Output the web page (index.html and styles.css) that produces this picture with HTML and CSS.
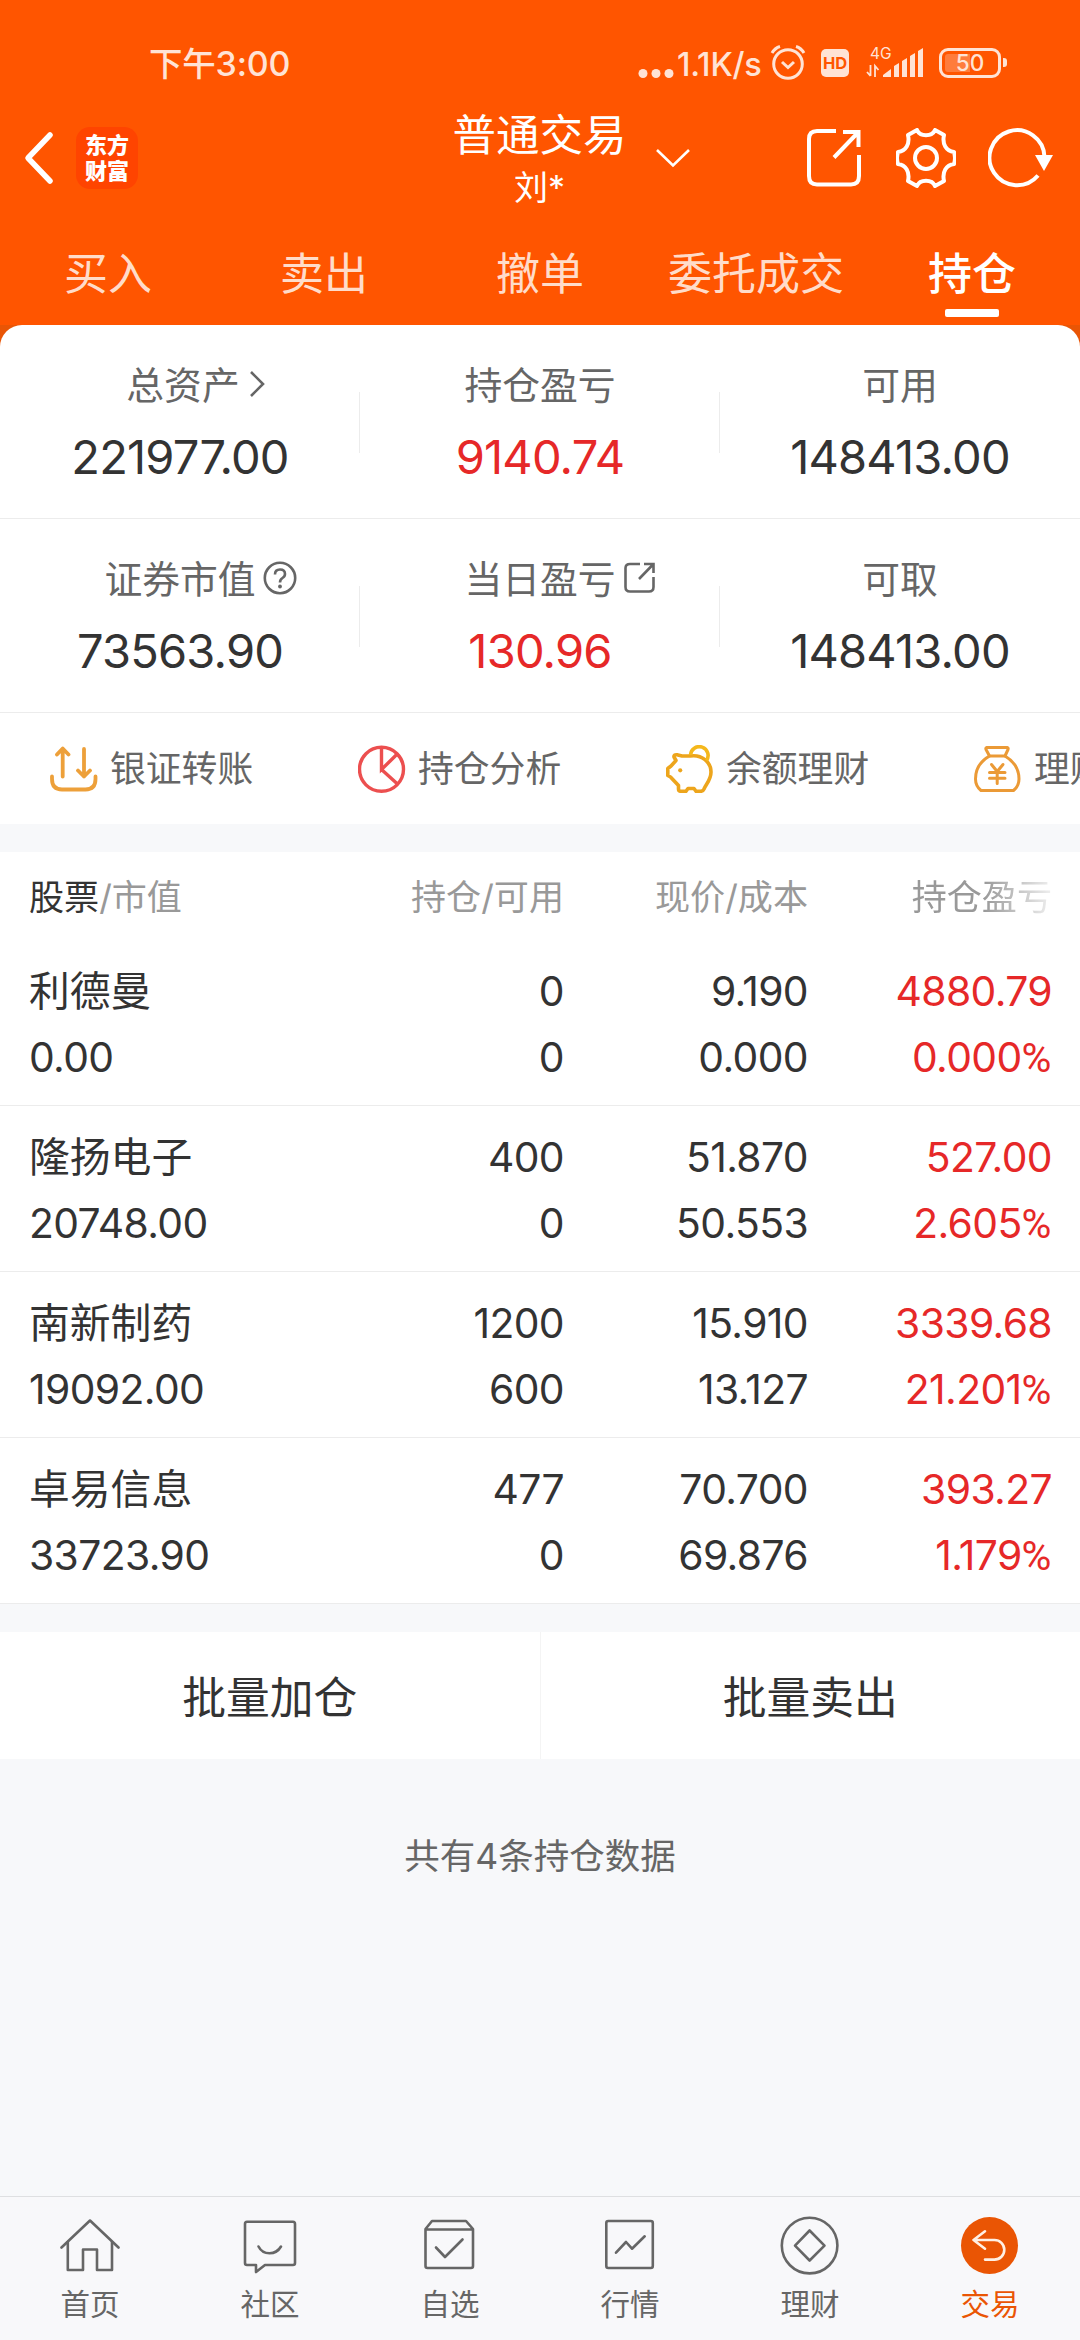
FILE: index.html
```html
<!DOCTYPE html>
<html lang="zh-CN">
<head>
    <meta charset="UTF-8" />
    <meta name="viewport" content="width=device-width, initial-scale=1.0" />
    <title>普通交易 - 持仓</title>
    <link rel="stylesheet" href="styles.css">
</head>
<body>
    <div class="app">
        <header class="top">
            <div class="status-bar">
                <span class="clock"><span class="clock-cn">下午</span>3:00</span>
                <div class="status-right">
                    <svg class="dots" width="36" height="34" viewBox="0 0 36 34" fill="currentColor"><circle cx="5" cy="26.5" r="4.5" /><circle cx="18" cy="26.5" r="4.5" /><circle cx="31" cy="26.5" r="4.5" /></svg>
                    <span class="speed">1.1K/s</span>
                    <svg class="alarm" width="36" height="36" viewBox="0 0 36 36" fill="none" stroke="currentColor" stroke-width="3"><circle cx="18" cy="20" r="14.3" /><path d="M12 18 L18 23.5 L24 18" /><path d="M2 9 Q5 4 10 2.5 M26 2.5 Q31 4 34 9" /></svg>
                    <span class="hd">HD</span>
                    <svg class="signal" width="58" height="36" viewBox="0 0 58 36" fill="currentColor">
                        <text x="4" y="15.5" font-size="15.5">4G</text>
                        <path d="M4.5 22 V33 M1 29 L4.5 33 M9 34 V23 L12.5 27" fill="none" stroke="currentColor" stroke-width="1.8" />
                        <path d="M17 34 V32 L25 26 V34 Z M28 23 l5 -3 V34 h-5 Z M36 18 l5 -3 V34 h-5 Z M44 13 l5 -3 V34 h-5 Z M52 8 l5 -3 V34 h-5 Z" />
                    </svg>
                    <div class="battery"><span>50</span></div>
                </div>
            </div>

            <div class="title-bar">
                <div class="title-left">
                    <svg width="30" height="54" viewBox="0 0 30 54" fill="none" stroke="#fff" stroke-width="5.5" stroke-linecap="round" stroke-linejoin="round"><path d="M26 4 L4 27 L26 50" /></svg>
                    <div class="logo">东方<br>财富</div>
                </div>
                <div class="title-text">
                    <h1>普通交易</h1>
                    <p>刘*</p>
                </div>
                <div class="title-right">
                    <svg class="arrow-down" width="36" height="22" viewBox="0 0 36 22" fill="none" stroke="#fff" stroke-width="2.6"><path d="M2 3 L18 18.5 L34 3" /></svg>
                    <svg class="share" width="54" height="58" viewBox="0 0 54 58" fill="none" stroke="#fff" stroke-width="4"><path d="M29 2 H10 Q2 2 2 10 V47 Q2 55.5 10 55.5 H44 Q52 55.5 52 47 V26" /><path d="M36 3 H51.5 V18 M51.5 3 L27 28.5" /></svg>
                    <svg class="gear" width="60" height="60" viewBox="0 0 60 60" fill="none" stroke="#fff" stroke-width="4" stroke-linejoin="round"><path d="M21 2 C24 9 36 9 39 2 L48 7 C46 16 50 23 58 24 Q60 30 58 36 C50 37 46 44 48 53 L39 58 C36 51 24 51 21 58 L12 53 C14 44 10 37 2 36 Q0 30 2 24 C10 23 14 16 12 7 Z" /><circle cx="30" cy="30" r="11" /></svg>
                    <svg class="refresh" width="66" height="60" viewBox="0 0 66 60"><path d="M56.5 29 A27.5 27.5 0 1 0 50 47.5" fill="none" stroke="#fff" stroke-width="4" /><path d="M47 27 H65 L56 43 Z" fill="#fff" /></svg>
                </div>
            </div>

            <nav class="tabs">
                <a>买入</a>
                <a>卖出</a>
                <a>撤单</a>
                <a>委托成交</a>
                <a class="active">持仓</a>
            </nav>
        </header>

        <!-- Account summary -->
        <div class="summary-wrap">
            <section class="summary">
                <div class="stats">
                    <div class="stat">
                        <div class="label label-more">总资产<svg width="16" height="30" viewBox="0 0 16 30" fill="none" stroke="currentColor" stroke-width="2.6"><path d="M2 3 L14 15 L2 27" /></svg></div>
                        <div class="value">221977.00</div>
                    </div>
                    <div class="stat">
                        <div class="label">持仓盈亏</div>
                        <div class="value red">9140.74</div>
                    </div>
                    <div class="stat">
                        <div class="label">可用</div>
                        <div class="value">148413.00</div>
                    </div>
                </div>
                <div class="stats">
                    <div class="stat">
                        <div class="label label-icon">证券市值<svg width="34" height="34" viewBox="0 0 34 34" fill="none" stroke="currentColor" stroke-width="2.6"><circle cx="17" cy="17" r="15.2" /><path d="M12 13.5 Q12 8.5 17 8.5 Q22 8.5 22 13 Q22 15.5 19.5 17 Q17 18.5 17 21.5" /><circle cx="17" cy="25.5" r="1.9" fill="currentColor" stroke="none" /></svg></div>
                        <div class="value">73563.90</div>
                    </div>
                    <div class="stat">
                        <div class="label label-icon">当日盈亏<svg width="34" height="34" viewBox="0 0 34 34" fill="none" stroke="currentColor" stroke-width="2.6"><path d="M17 3 H7 Q2.5 3 2.5 7 V26 Q2.5 30.5 7 30.5 H26 Q30.5 30.5 30.5 26 V16" /><path d="M21 3 H30.5 V12 M30.5 3 L16 18" /></svg></div>
                        <div class="value red">130.96</div>
                    </div>
                    <div class="stat">
                        <div class="label">可取</div>
                        <div class="value">148413.00</div>
                    </div>
                </div>

                <div class="shortcuts">
                    <div class="shortcut">
                        <svg width="48" height="48" viewBox="0 0 48 48" fill="none" stroke="#eda03a" stroke-width="3.8" stroke-linecap="round" stroke-linejoin="round"><path d="M12.7 31.5 V4 M7 9.5 L12.7 3.5 L18.5 9.5" /><path d="M34 4 V31.5 M28 25.5 L34 31.5 L40 25.5" /><path d="M2 31.5 V34 Q2 44.5 12 44.5 H35.5 Q45.5 44.5 45.5 34 V31.5" /></svg>
                        <span>银证转账</span>
                    </div>
                    <div class="shortcut">
                        <svg width="48" height="48" viewBox="0 0 48 48" fill="none" stroke="#ec4f4f" stroke-width="3.4"><circle cx="23.5" cy="24.3" r="22" /><path d="M23.5 3 V24.5 L39.5 8.8 M23.5 24.5 L39.5 39" /></svg>
                        <span>持仓分析</span>
                    </div>
                    <div class="shortcut">
                        <svg width="48" height="48" viewBox="0 0 48 48" fill="none" stroke="#eda51c" stroke-width="3.6" stroke-linejoin="round"><path d="M24 11 C36 9 45 17.5 45 27 C45 35 40 39 38 44 Q37 46.3 34.5 46.3 H30 L28 43.5 H22 L20 46.3 H15 Q12.5 46.3 12.5 44 V40.5 L4.5 32 L1.8 30.5 V23.5 L5 21 L10 15.5 L8 12 Q7.5 9.5 11 9.8 L16 11 Z" /><path d="M24.5 10 A8.8 8.8 0 1 1 40.5 15.5" stroke="#f5b81c" /><circle cx="14.2" cy="25.3" r="2.1" fill="#eda51c" stroke="none" /></svg>
                        <span>余额理财</span>
                    </div>
                    <div class="shortcut">
                        <svg width="48" height="48" viewBox="0 0 48 48" fill="none" stroke="#eb9a36" stroke-width="3" stroke-linecap="round" stroke-linejoin="round"><path d="M12.5 2.5 H33.5 Q34.5 3 34 4.5 L31 11 H15.5 L12 4.5 Q11.5 3 12.5 2.5 Z" /><path d="M15.5 11 C5 17 1.5 26 1.5 34 Q1.5 41 7 45.5 H39.5 Q45 41 45 34 C45 26 41 17 31 11" /><path d="M17.5 19.5 L23.2 26.5 L29 19.5 M23.2 26.5 V38.5 M15.5 27.5 H31 M15.5 33.3 H31" /></svg>
                        <span>理财</span>
                    </div>
                </div>
            </section>
        </div>

        <!-- Holdings -->
        <section class="holdings">
            <div class="row head">
                <div><b>股票</b>/市值</div>
                <div>持仓/可用</div>
                <div>现价/成本</div>
                <div class="fade">持仓盈亏</div>
            </div>
            <div class="row">
                <div><span class="name">利德曼</span><span>0.00</span></div>
                <div><span>0</span><span>0</span></div>
                <div><span>9.190</span><span>0.000</span></div>
                <div class="red"><span>4880.79</span><span>0.000<i>%</i></span></div>
            </div>
            <div class="row">
                <div><span class="name">隆扬电子</span><span>20748.00</span></div>
                <div><span>400</span><span>0</span></div>
                <div><span>51.870</span><span>50.553</span></div>
                <div class="red"><span>527.00</span><span>2.605<i>%</i></span></div>
            </div>
            <div class="row">
                <div><span class="name">南新制药</span><span>19092.00</span></div>
                <div><span>1200</span><span>600</span></div>
                <div><span>15.910</span><span>13.127</span></div>
                <div class="red"><span>3339.68</span><span>21.201<i>%</i></span></div>
            </div>
            <div class="row">
                <div><span class="name">卓易信息</span><span>33723.90</span></div>
                <div><span>477</span><span>0</span></div>
                <div><span>70.700</span><span>69.876</span></div>
                <div class="red"><span>393.27</span><span>1.179<i>%</i></span></div>
            </div>
        </section>

        <div class="batch">
            <button>批量加仓</button>
            <button>批量卖出</button>
        </div>

        <p class="total">共有4条持仓数据</p>

        <nav class="bottom-nav">
            <a>
                <svg viewBox="0 0 60 60"><path d="M1.5 31.5 L30 4.5 L58.5 31.5" /><path d="M7.8 26 V54 H23 V33.5 H37 V54 H52 V26" /></svg>
                首页
            </a>
            <a>
                <svg viewBox="0 0 60 60"><path d="M7 5.8 H53 Q55 5.8 55 8 V47 Q55 49 53 49 H25 L16 56 V49 H7 Q5 49 5 47 V8 Q5 5.8 7 5.8 Z" /><path d="M18.5 30.5 Q22 37.3 29.5 37.3 Q37 37.3 41 30.5" /></svg>
                社区
            </a>
            <a>
                <svg viewBox="0 0 60 60"><path d="M5.5 13 L12 5 H46 L53 13 V50 Q53 52 51 52 H7.5 Q5.5 52 5.5 50 Z M5.5 13.5 H53" /><path d="M16 31.5 L25 41 L42.5 23.5" /></svg>
                自选
            </a>
            <a>
                <svg viewBox="0 0 60 60"><rect x="6.3" y="5" width="46.5" height="47" rx="2" /><path d="M16 36.7 L26 26 L32 32.7 L44.7 20.3" /></svg>
                行情
            </a>
            <a>
                <svg viewBox="0 0 60 60"><circle cx="29.6" cy="29.6" r="27.8" /><path d="M29.6 14.5 L44.5 29.6 L29.6 44.5 L15 29.6 Z" /></svg>
                理财
            </a>
            <a class="active">
                <svg viewBox="0 0 60 60"><circle cx="29.5" cy="29.5" r="28.5" fill="#ea5504" stroke="none" /><path d="M25 15.3 L13.5 24 L25 32.7 M13.5 24 H34.5 A9.8 9.8 0 0 1 34.5 43.6 H25" stroke="#fff0e4" /></svg>
                交易
            </a>
        </nav>
    </div>
</body>
</html>
```
FILE: styles.css
```css
* {
    box-sizing: border-box;
    margin: 0;
    padding: 0;
}

body {
    font-family: Inter, "Noto Sans CJK SC", sans-serif;
    background: #f7f8fa;
    color: #333;
}

svg {
    display: block;
    flex: none;
}

.app {
    width: 1080px;
    height: 2340px;
    display: flex;
    flex-direction: column;
    overflow: hidden;
}

.red {
    color: #e62828;
}

/* Header */
.top {
    height: 325px;
    background: #ff5500;
    color: #fff;
}

.status-bar {
    height: 104px;
    padding: 24px 73px 0 149px;
    display: flex;
    align-items: center;
    justify-content: space-between;
    color: #ffe3d5;
}

.clock {
    font-size: 34px;
    font-weight: 500;
    line-height: 40px;
    margin-top: -1px;
    letter-spacing: -0.2px;
}

.clock-cn {
    font-size: 33.5px;
}

.status-right {
    display: flex;
    align-items: center;
}

.speed {
    font-size: 32.5px;
    font-weight: 500;
    width: 93px;
    margin-left: 3px;
    letter-spacing: -0.2px;
    white-space: nowrap;
}

.alarm {
    margin-top: -4px;
}

.hd {
    width: 28px;
    height: 28px;
    margin-left: 15px;
    margin-top: -2px;
    border-radius: 5px;
    background: #ffe3d5;
    color: #ff5500;
    font-size: 16.5px;
    font-weight: 700;
    line-height: 29px;
    text-align: center;
}

.signal {
    margin-left: 17px;
    margin-top: -6px;
}

.battery {
    position: relative;
    width: 62px;
    height: 30px;
    margin-left: 15px;
    margin-right: 6px;
    margin-top: -2px;
    padding: 3px;
    border: 3.5px solid #ffe3d5;
    border-radius: 9px;
    background: linear-gradient(90deg, #ff7c3c 50%, transparent 50%) content-box;
    font-size: 22.5px;
    font-weight: 500;
    line-height: 17px;
    text-align: center;
}

.battery::after {
    content: "";
    position: absolute;
    right: -9px;
    top: 7px;
    width: 4px;
    height: 9px;
    border-radius: 0 3px 3px 0;
    background: #ffe3d5;
}

.title-bar {
    height: 126px;
    display: flex;
}

.title-left,
.title-right {
    flex: 1;
    height: 108px;
    display: flex;
    align-items: center;
}

.title-left {
    padding-left: 24px;
}

.logo {
    width: 62px;
    height: 62px;
    margin-left: 22px;
    padding-top: 5px;
    border-radius: 14px;
    background: #ff4400;
    font-size: 22px;
    font-weight: 900;
    line-height: 26px;
    text-align: center;
}

.title-text {
    text-align: center;
}

.title-text h1 {
    font-size: 43.5px;
    font-weight: 400;
    line-height: 62px;
    padding-left: 1px;
}

.title-text p {
    font-size: 34px;
    line-height: 44px;
    padding-left: 1px;
}

.title-right {
    padding-right: 26px;
}

.arrow-down {
    margin-left: 28px;
}

.share {
    margin-left: auto;
}

.gear {
    margin-left: 35px;
}

.refresh {
    margin-left: 32px;
}

.tabs {
    height: 95px;
    display: grid;
    grid-template-columns: repeat(5, 1fr);
}

.tabs a {
    font-size: 44px;
    line-height: 88px;
    text-align: center;
    color: #ffdcca;
}

.tabs .active {
    color: #fff;
    font-weight: 500;
}

.tabs .active::after {
    content: "";
    display: block;
    width: 54px;
    height: 8px;
    margin: -9px auto 0;
    border-radius: 2px;
    background: #fff;
}

/* Account summary */
.summary-wrap {
    background: #e95505;
}

.summary {
    height: 499px;
    background: #fff;
    border-radius: 22px 22px 0 0;
    overflow: hidden;
}

.stats {
    height: 194px;
    display: grid;
    grid-template-columns: repeat(3, 1fr);
    border-bottom: 1px solid #ececec;
    background:
        linear-gradient(#ececec, #ececec) 359px 67px / 1px 61px no-repeat,
        linear-gradient(#ececec, #ececec) 719px 67px / 1px 61px no-repeat;
}

.stat {
    padding-top: 33px;
    text-align: center;
}

.label {
    display: flex;
    align-items: center;
    justify-content: center;
    font-size: 37.8px;
    line-height: 54px;
    color: #666;
}

.label-more {
    padding-left: 14px;
}

.label-more svg {
    margin: -3px -17px 0 9px;
}

.label-icon svg {
    margin: -3px -41px 0 7px;
}

.value {
    font-size: 47px;
    line-height: 90px;
    letter-spacing: -0.8px;
}

.shortcuts {
    height: 111px;
    padding-left: 50px;
    display: flex;
}

.shortcut {
    flex: 0 0 308px;
    display: flex;
    align-items: center;
    gap: 12px;
    font-size: 35.8px;
    line-height: 54px;
    color: #666;
}

/* Holdings */
.holdings {
    margin-top: 28px;
    background: #fff;
}

.row {
    height: 166px;
    padding: 18px 28px 0;
    display: grid;
    grid-template-columns: 1fr 244px 244px 244px;
    align-content: start;
    border-bottom: 1px solid #ececec;
    font-size: 40.8px;
    line-height: 66px;
    letter-spacing: -0.6px;
    text-align: right;
}

.row > div:first-child {
    padding-left: 1px;
    text-align: left;
}

.row span {
    display: block;
}

.row .name {
    letter-spacing: 0;
}

/* narrower percent sign */
.row i {
    font-family: Roboto, sans-serif;
    font-style: normal;
    letter-spacing: 0.5px;
}

.head {
    height: 88px;
    padding-top: 0;
    border-bottom: 0;
    font-size: 35.1px;
    line-height: 90px;
    letter-spacing: 0;
    color: #999;
}

.head b {
    font-weight: 400;
    color: #333;
}

.fade {
    -webkit-mask-image: linear-gradient(90deg, #000 72%, transparent 105%);
    mask-image: linear-gradient(90deg, #000 72%, transparent 105%);
}

/* Batch actions */
.batch {
    height: 127px;
    margin-top: 28px;
    display: flex;
    background: #fff;
}

.batch button {
    flex: 1;
    padding-bottom: 2px;
    border: none;
    background: none;
    font: inherit;
    font-size: 43.8px;
    color: #333;
}

.batch button + button {
    border-left: 1px solid #f4f4f4;
}

.total {
    margin-top: 71px;
    font-size: 35.5px;
    line-height: 54px;
    text-align: center;
    color: #666;
}

/* Bottom navigation */
.bottom-nav {
    height: 144px;
    margin-top: auto;
    display: grid;
    grid-template-columns: repeat(6, 1fr);
    border-top: 1px solid #dedfe1;
    background: #f8f8fa;
}

.bottom-nav a {
    padding-top: 19px;
    display: flex;
    flex-direction: column;
    align-items: center;
    font-size: 29.5px;
    line-height: 56px;
    color: #666;
}

.bottom-nav svg {
    width: 60px;
    height: 60px;
    fill: none;
    stroke: #666;
    stroke-width: 2.6;
    stroke-linejoin: round;
    stroke-linecap: round;
}

.bottom-nav .active {
    color: #ea5504;
}
```
